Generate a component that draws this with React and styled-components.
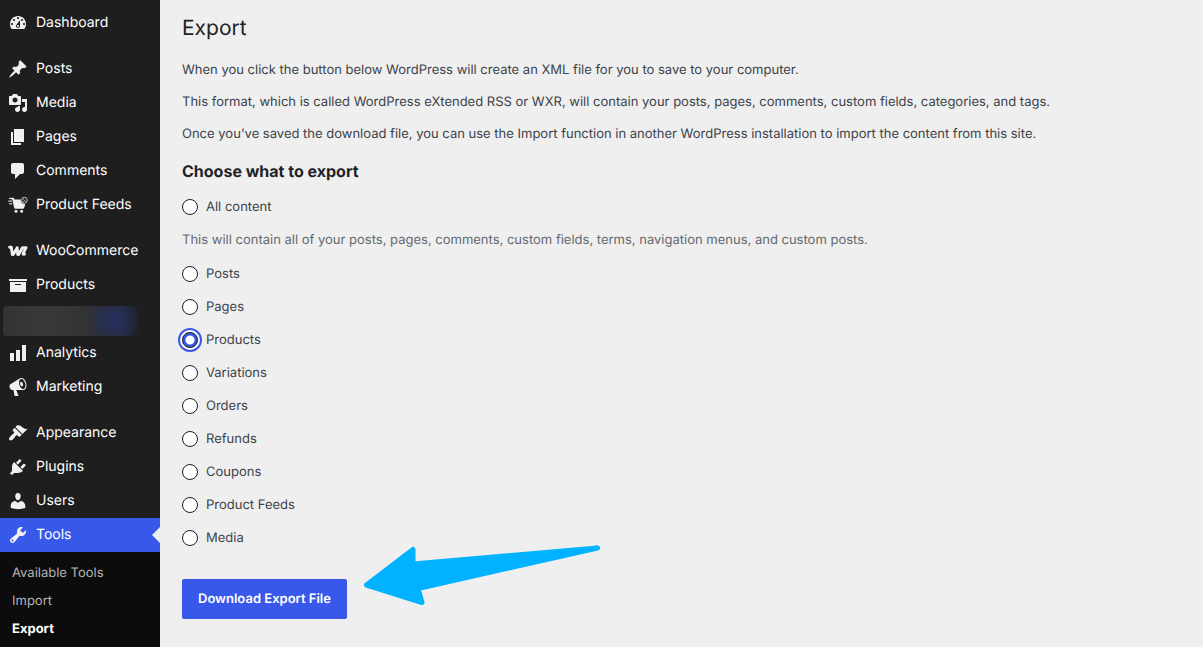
import React, { useState } from "react";
import styled, { createGlobalStyle, css } from "styled-components";

const GlobalStyle = createGlobalStyle`
  *, *::before, *::after { box-sizing: border-box; }
  body {
    margin: 0;
    background: #efefef;
    color: #3c434a;
    font: 13px/20px Inter, "Liberation Sans", sans-serif;
    text-rendering: geometricPrecision;
    -webkit-font-smoothing: antialiased;
  }
`;

const Page = styled.div`
  display: flex;
  min-height: 100vh;
`;

const Sidebar = styled.nav`
  flex: 0 0 160px;
  padding-top: 6px;
  background: #1e1e1e;
`;

const MenuGroup = styled.ul`
  margin: 0;
  padding: 0;
  list-style: none;

  & + & {
    margin-top: 12px;
  }
`;

const MenuLink = styled.a`
  position: relative;
  display: flex;
  align-items: center;
  gap: 8px;
  height: 34px;
  padding-left: 8px;
  color: #fff;
  font-size: 14px;
  font-weight: 400;
  text-decoration: none;
  white-space: nowrap;

  ${(p) =>
    p.$current &&
    css`
      background: #3858e9;

      &::after {
        content: "";
        position: absolute;
        top: 9px;
        right: 0;
        border: 8px solid transparent;
        border-left-width: 0;
        border-right-color: #efefef;
      }
    `}
`;

const MenuIcon = styled.svg`
  flex: none;
  width: 20px;
  height: 20px;
  fill: #f0f0f1;
`;

const HiddenItem = styled.li`
  height: 34px;
  padding: 4px 22px 0 3px;

  &::before {
    content: "";
    display: block;
    height: 30px;
    border-radius: 4px;
    background: radial-gradient(ellipse 30px 24px at 112px 14px, #26315f, transparent),
      linear-gradient(90deg, #333 0, #393939 40px, #333 80px, #242838 120px, #1e1e1e 100%);
  }
`;

const Submenu = styled.ul`
  margin: 0;
  padding: 7px 0 4px;
  list-style: none;
  background: #0c0c0c;
`;

const SubmenuLink = styled.a`
  display: block;
  padding: 4px 12px;
  color: ${(p) => (p.$current ? "#fff" : "#b4b4b4")};
  font-weight: ${(p) => (p.$current ? 700 : 400)};
  text-decoration: none;
`;

const Content = styled.main`
  flex: 1;
  min-width: 0;
  padding: 14px 20px 28px 22px;
`;

const Title = styled.h1`
  margin: 0 0 16px;
  color: #1d2327;
  font-size: 21px;
  font-weight: 400;
  line-height: 30px;
`;

const Paragraph = styled.p`
  margin: 0 0 12px;
`;

const SectionTitle = styled.h2`
  margin: 15px 0 14px;
  color: #1d2327;
  font-size: 16px;
  font-weight: 700;
  line-height: 24px;
`;

const Options = styled.fieldset`
  display: flex;
  flex-direction: column;
  gap: 13px;
  margin: 0;
  padding: 0;
  border: 0;
`;

const Option = styled.label`
  display: flex;
  align-items: center;
  align-self: flex-start;
  gap: 8px;
`;

const Description = styled.p`
  margin: 0 0 1px;
  color: #646970;
`;

const Radio = styled.input`
  appearance: none;
  flex: none;
  width: 16px;
  height: 16px;
  margin: 0;
  border: 1px solid #1e1e1e;
  border-radius: 50%;
  background: #fff;

  &:checked {
    background: radial-gradient(circle, #fff 4px, #3858e9 5px);
    box-shadow: 0 0 0 2px #fff, 0 0 0 4px #3858e9;
  }
`;

const Actions = styled.div`
  position: relative;
  margin-top: 31px;
`;

const DownloadButton = styled.button`
  height: 40px;
  padding: 0 16px;
  border: 0;
  border-radius: 2px;
  background: #3858e9;
  color: #fff;
  font: 600 13px/20px Inter, "Liberation Sans", sans-serif;
  text-rendering: inherit;
  white-space: nowrap;
`;

const Arrow = styled.svg`
  position: absolute;
  top: -35px;
  left: 180px;
  width: 240px;
  height: 63px;
  fill: #00b2ff;
  stroke: #00b2ff;
  stroke-width: 5;
  stroke-linejoin: round;
  pointer-events: none;
`;

const icons = {
  dashboard: (
    <path d="M3.76 16h12.48c1.1-1.37 1.76-3.11 1.76-5 0-4.42-3.58-8-8-8s-8 3.58-8 8c0 1.89.66 3.63 1.76 5zM10 4c.55 0 1 .45 1 1s-.45 1-1 1-1-.45-1-1 .45-1 1-1zM6 6c.55 0 1 .45 1 1s-.45 1-1 1-1-.45-1-1 .45-1 1-1zm8 0c.55 0 1 .45 1 1s-.45 1-1 1-1-.45-1-1 .45-1 1-1zm-5.37 5.55L12 7v6c0 1.1-.9 2-2 2s-2-.9-2-2c0-.57.24-1.08.63-1.45zM4 10c.55 0 1 .45 1 1s-.45 1-1 1-1-.45-1-1 .45-1 1-1zm12 0c.55 0 1 .45 1 1s-.45 1-1 1-1-.45-1-1 .45-1 1-1zm-5 3c0-.55-.45-1-1-1s-1 .45-1 1 .45 1 1 1 1-.45 1-1z" />
  ),
  post: (
    <path d="M10.44 3.02l1.82-1.82 6.36 6.35-1.83 1.82c-1.05-.68-2.48-.57-3.41.36l-.75.75c-.92.93-1.04 2.35-.35 3.41l-1.83 1.82-2.41-2.41-2.8 2.79c-.42.42-3.38 2.71-3.8 2.29s1.86-3.39 2.28-3.81l2.79-2.79L4.1 9.36l1.83-1.82c1.05.69 2.48.57 3.4-.36l.75-.75c.93-.92 1.05-2.35.36-3.41z" />
  ),
  media: (
    <path d="M13 11V4c0-.55-.45-1-1-1h-1.67L9 1H5L3.67 3H2c-.55 0-1 .45-1 1v7c0 .55.45 1 1 1h10c.55 0 1-.45 1-1zM7 4.5c1.38 0 2.5 1.12 2.5 2.5S8.38 9.5 7 9.5 4.5 8.38 4.5 7 5.62 4.5 7 4.5zM14 6h5v10.5c0 1.38-1.12 2.5-2.5 2.5S14 17.88 14 16.5s1.12-2.5 2.5-2.5c.17 0 .34.02.5.05V9h-3V6zm-4 8.05V13h2v3.5c0 1.38-1.12 2.5-2.5 2.5S7 17.88 7 16.5 8.12 14 9.5 14c.17 0 .34.02.5.05z" />
  ),
  page: <path d="M6 15V2h10v13H6zm-1 1h8v2H3V5h2v11z" />,
  comments: (
    <path d="M5 2h9c1.1 0 2 .9 2 2v7c0 1.1-.9 2-2 2h-2l-5 5v-5H5c-1.1 0-2-.9-2-2V4c0-1.1.9-2 2-2z" />
  ),
  feeds: (
    <>
      <path d="M3.2 2.8h2.5l.9 1.800h6c0 2.600 1.500 4.400 4.700 4.600l-1.200 3.800c-.2.500-.5.800-1 .8H7.200c-.5 0-.9-.3-1-.8L4.400 4.500H3.200z" />
      <circle cx="8" cy="16.200" r="1.500" />
      <circle cx="13.600" cy="16.200" r="1.500" />
      <path
        d="M1.400 3.400h1.800M.6 6.100h3M1.400 8.800h2.600"
        fill="none"
        stroke="#f0f0f1"
        strokeWidth="1"
        strokeLinecap="round"
      />
      <circle cx="16.400" cy="5.200" r="2.900" fill="#1e1e1e" stroke="#c8c8c8" strokeWidth="1" />
      <path d="M15.200 4.100l2.500 2.200M15.400 6.300l.9-.5" stroke="#c8c8c8" strokeWidth="1" />
    </>
  ),
  woo: (
    <path
      d="M1.600 6.200h1.700l1 7.300h.9l4-6.700.5 6.700h.9l4-6.900h3.500l-2.700 5.200q-1 2 1 1.300"
      fill="none"
      stroke="#f0f0f1"
      strokeWidth="2.900"
      strokeLinejoin="round"
      strokeLinecap="round"
    />
  ),
  archive: <path d="M19 4v2H1V4h18zM2 7h16v10H2V7zm11 3V9H7v1h6z" />,
  chart: <path d="M18 18V2h-4v16h4zm-6 0V7H8v11h4zm-6 0v-8H2v8h4z" />,
  megaphone: (
    <path d="M18.15 5.94c.46 1.62.38 3.22-.02 4.48-.42 1.28-1.26 2.18-2.3 2.48-.16.06-.26.06-.4.06-.06.02-.12.02-.18.02-.06.02-.14.02-.22.02h-6.8l2.22 5.5c.02.14-.06.26-.14.34-.08.1-.24.16-.34.16H6.95c-.1 0-.26-.06-.34-.16-.08-.08-.16-.2-.14-.34l-1-5.5H4.25l-.02-.02c-.5.06-1.08-.18-1.54-.62s-.88-1.08-1.06-1.88c-.24-.8-.2-1.56-.02-2.2.18-.62.58-1.08 1.06-1.3l.02-.02 9-5.4c.1-.06.18-.1.24-.16.06-.04.14-.08.24-.12.16-.08.28-.12.5-.18 1.04-.3 2.24.1 3.22.98s1.84 2.24 2.26 3.86zm-2.58 5.98h-.02c.4-.1.74-.34 1.04-.7.58-.7.86-1.76.86-3.04 0-.64-.1-1.3-.28-1.98-.34-1.36-1.02-2.5-1.78-3.24s-1.68-1.1-2.46-.88c-.82.22-1.4.96-1.7 2-.32 1.04-.28 2.36.06 3.72.38 1.36 1 2.5 1.8 3.24.78.74 1.62 1.1 2.48.88zm-2.54-7.08c.22-.04.42-.02.62.04.38.16.76.48 1.02 1s.42 1.2.42 1.78c0 .3-.04.56-.12.8-.18.48-.44.84-.86.94-.34.1-.8-.06-1.14-.4s-.64-.86-.78-1.5c-.18-.62-.12-1.24.02-1.72s.48-.84.82-.94z" />
  ),
  appearance: (
    <path d="M14.48 11.06L7.41 3.99l1.5-1.5c.5-.56 2.3-.47 3.51.32 1.21.8 1.43 1.28 2.91 2.1 1.18.64 2.45 1.26 4.45.85zm-.71.71L6.7 4.7 4.93 6.47c-.39.39-.39 1.02 0 1.41l1.06 1.06c.39.39.39 1.03 0 1.42-.6.6-1.43 1.11-2.21 1.69-.35.26-.7.53-1.01.84C1.43 14.23.4 16.08 1.4 17.07c.99 1 2.84-.03 4.18-1.36.31-.31.58-.66.85-1.02.57-.78 1.08-1.61 1.69-2.21.39-.39 1.02-.39 1.41 0l1.06 1.06c.39.39 1.02.39 1.41 0z" />
  ),
  plugins: (
    <path d="M13.11 4.36L9.87 7.6 8 5.73l3.24-3.24c.35-.34 1.05-.2 1.56.32.52.51.66 1.21.31 1.55zm-8 1.77l.91-1.12 9.01 9.01-1.19.84c-.71.71-2.63 1.16-3.82 1.16H6.14L4.9 17.26c-.59.59-1.54.59-2.12 0-.59-.58-.59-1.53 0-2.12l1.24-1.24v-3.88c0-1.13.4-3.19 1.09-3.89zm7.26 3.97l3.24-3.24c.34-.35 1.04-.21 1.55.31.52.51.66 1.21.31 1.55l-3.24 3.25z" />
  ),
  users: (
    <path d="M10 9.25c-2.27 0-2.73-3.44-2.73-3.44C7 4.02 7.82 2 9.97 2c2.16 0 2.98 2.02 2.71 3.81 0 0-.41 3.44-2.68 3.44zm0 2.57L12.72 10c2.39 0 4.52 2.33 4.52 4.53v2.49s-3.65 1.13-7.24 1.13c-3.65 0-7.24-1.13-7.24-1.13v-2.49c0-2.25 1.94-4.48 4.47-4.48z" />
  ),
  tools: (
    <path d="M16.68 9.77c-1.34 1.34-3.3 1.67-4.95.99l-5.41 6.52c-.99.99-2.59.99-3.58 0s-.99-2.59 0-3.57l6.52-5.42c-.68-1.65-.35-3.61.99-4.95 1.28-1.28 3.12-1.62 4.72-1.06l-2.89 2.89 2.82 2.82 2.86-2.87c.53 1.58.18 3.39-1.08 4.65zM3.81 16.21c.4.39 1.04.39 1.43 0 .4-.4.4-1.04 0-1.43-.39-.4-1.03-.4-1.43 0-.39.39-.39 1.03 0 1.43z" />
  ),
};

const menu = [
  [["Dashboard", "dashboard"]],
  [
    ["Posts", "post"],
    ["Media", "media"],
    ["Pages", "page"],
    ["Comments", "comments"],
    ["Product Feeds", "feeds"],
  ],
  [["WooCommerce", "woo"], ["Products", "archive"], null, ["Analytics", "chart"], ["Marketing", "megaphone"]],
  [
    ["Appearance", "appearance"],
    ["Plugins", "plugins"],
    ["Users", "users"],
    ["Tools", "tools"],
  ],
];

const contentTypes = [
  "Posts",
  "Pages",
  "Products",
  "Variations",
  "Orders",
  "Refunds",
  "Coupons",
  "Product Feeds",
  "Media",
];

export default function App() {
  const [selected, setSelected] = useState("Products");

  const option = (name) => (
    <Option key={name}>
      <Radio
        type="radio"
        name="content"
        value={name}
        checked={selected === name}
        onChange={() => setSelected(name)}
      />
      {name}
    </Option>
  );

  return (
    <Page>
      <GlobalStyle />
      <Sidebar aria-label="Main menu">
        {menu.map((group, i) => (
          <MenuGroup key={i}>
            {group.map((item) =>
              item ? (
                <li key={item[0]}>
                  <MenuLink href="#" $current={item[0] === "Tools"}>
                    <MenuIcon viewBox="0 0 20 20" aria-hidden="true">
                      {icons[item[1]]}
                    </MenuIcon>
                    {item[0]}
                  </MenuLink>
                </li>
              ) : (
                <HiddenItem key="hidden" aria-hidden="true" />
              )
            )}
          </MenuGroup>
        ))}
        <Submenu>
          {["Available Tools", "Import", "Export"].map((name) => (
            <li key={name}>
              <SubmenuLink href="#" $current={name === "Export"}>
                {name}
              </SubmenuLink>
            </li>
          ))}
        </Submenu>
      </Sidebar>
      <Content>
        <Title>Export</Title>
        <Paragraph>
          When you click the button below WordPress will create an XML file for you to save to your computer.
        </Paragraph>
        <Paragraph>
          This format, which is called WordPress eXtended RSS or WXR, will contain your posts, pages, comments, custom
          fields, categories, and tags.
        </Paragraph>
        <Paragraph>
          Once you’ve saved the download file, you can use the Import function in another WordPress installation to
          import the content from this site.
        </Paragraph>
        <SectionTitle id="choose">Choose what to export</SectionTitle>
        <Options aria-labelledby="choose">
          {option("All content")}
          <Description>
            This will contain all of your posts, pages, comments, custom fields, terms, navigation menus, and custom
            posts.
          </Description>
          {contentTypes.map(option)}
        </Options>
        <Actions>
          <DownloadButton type="button">Download Export File</DownloadButton>
          <Arrow viewBox="0 0 240 63" aria-hidden="true">
            <path d="M4.5 41L51 5.500L51 20L235.500 4L56 44.500L60 58.500Z" />
          </Arrow>
        </Actions>
      </Content>
    </Page>
  );
}
